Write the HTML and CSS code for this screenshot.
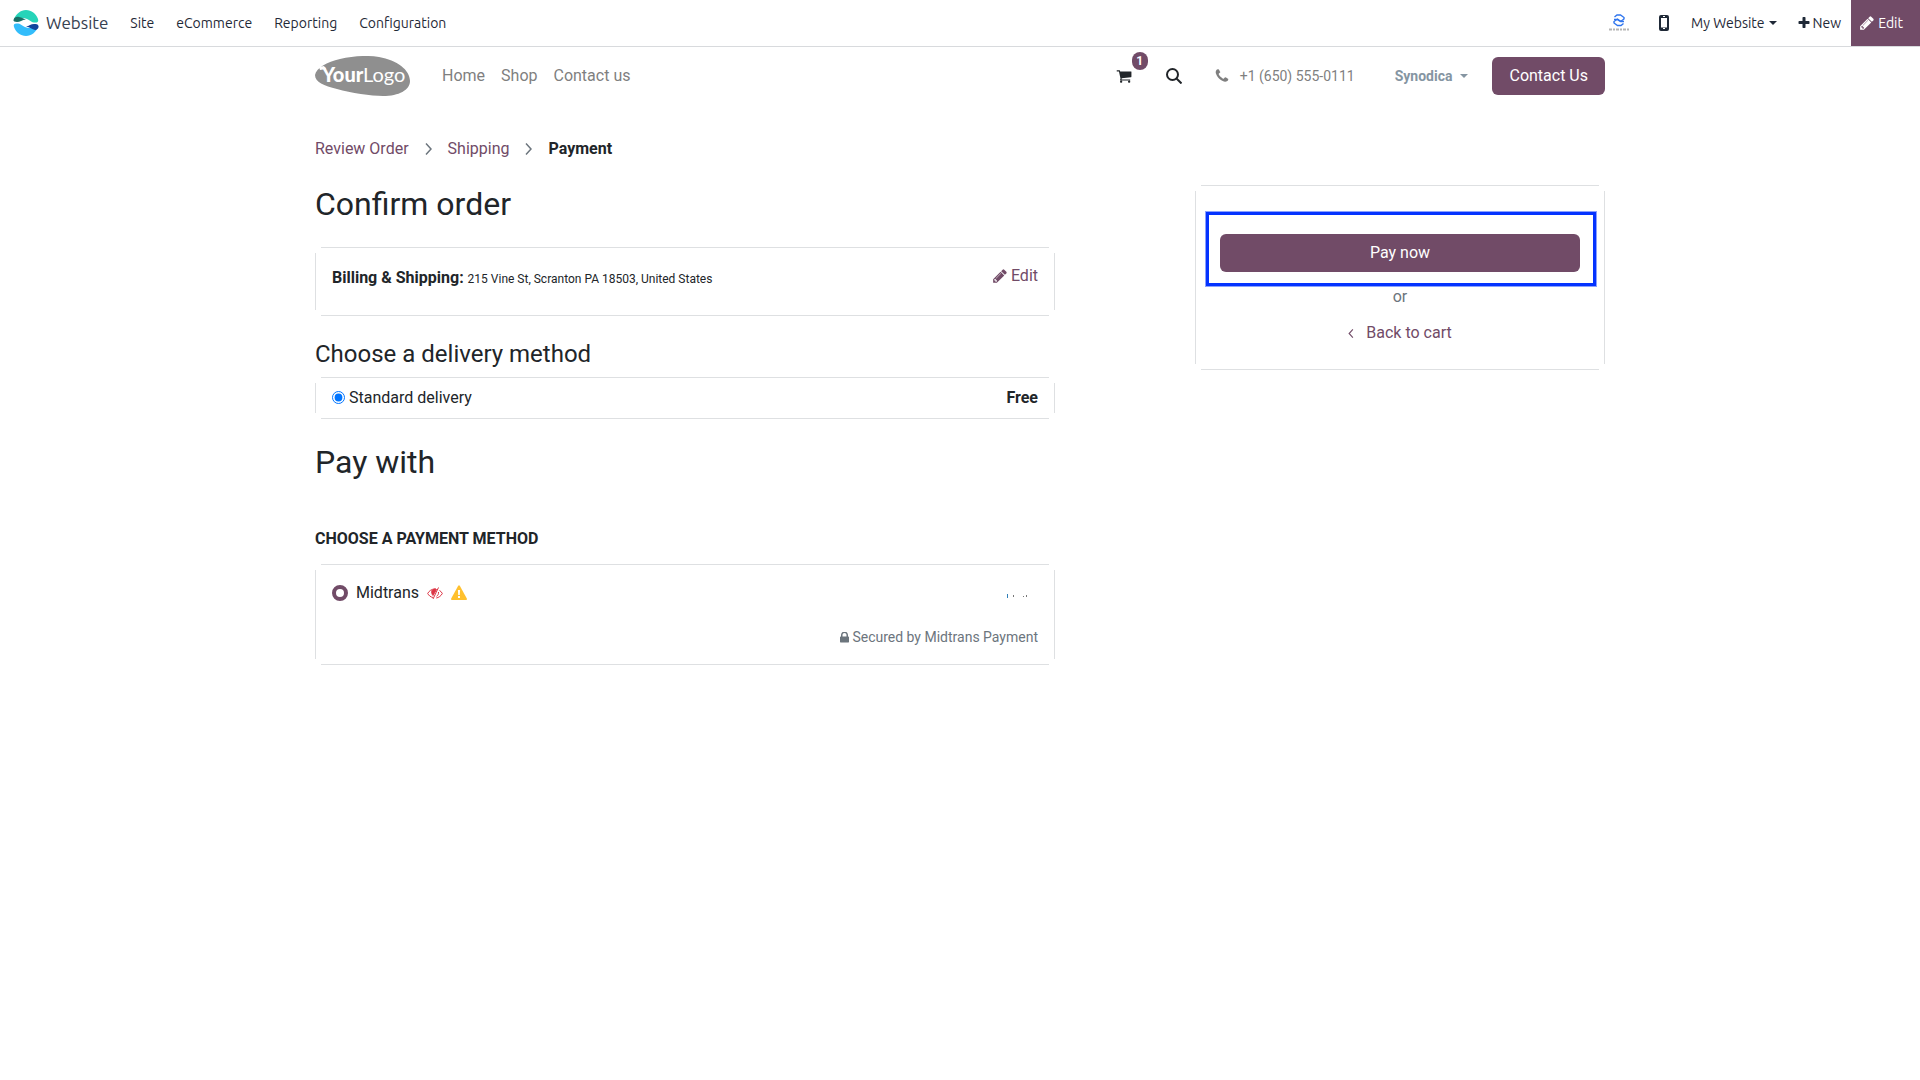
FILE: index.html
```html
<!DOCTYPE html>
<html lang="en">
  <head>
    <meta charset="utf-8">
    <title>Payment | My Website</title>
    <link rel="stylesheet" href="styles.css">
  </head>
  <body>
    <!-- icons used more than once -->
    <svg class="sprite" aria-hidden="true">
      <symbol id="pencil" viewBox="0 0 1792 1792">
        <path d="M491 1536l91-91-235-235-91 91v107h128v128h107zm523-928q0-22-22-22-10 0-17 7l-542 542q-7 7-7 17 0 22 22 22 10 0 17-7l542-542q7-7 7-17zm-54-192l416 416-832 832h-416v-416zm683 96q0 53-37 90l-166 166-416-416 166-165q36-38 90-38 53 0 91 38l235 234q37 39 37 91z"/>
      </symbol>
      <symbol id="chevron" viewBox="0 0 7 12">
        <path d="M1 .500L6 6l-5 5.500" fill="none" stroke="currentColor" stroke-width="1.500"/>
      </symbol>
    </svg>

    <nav class="topbar">
      <a class="app" href="#">
        <svg width="26" height="26" viewBox="0 0 26 26">
          <path d="M1 9C3 4 7.500 0 13 0s10 3.500 12 9c1 3-1 4-4 3.500C17 12 15 8 10 8 6 8 3 11 1 10z" fill="#26d4b9"/>
          <path d="M.500 10C1 7 4 6.500 6 7c3 .500 5 2 7 2.500C9 10 7 12 4 12c-2 0-4-1-3.500-2z" fill="#1a6f66"/>
          <path d="M25 17c-2 5-6.500 9-12 9S3 22.500 1 17c-1-3 1-4 4-3.500C9 14 11 18 16 18c4 0 7-3 9-2z" fill="#33bdfb"/>
          <path d="M25.500 16c-.500-2-2.500-2-4.500-2-3 0-5 2-8 2.500 4 .500 6 3 9 3.500 2 0 4-2 3.500-4z" fill="#11459c"/>
        </svg>
        <span>Website</span>
      </a>
      <a href="#">Site</a>
      <a href="#">eCommerce</a>
      <a href="#">Reporting</a>
      <a href="#">Configuration</a>

      <div class="systray">
        <a class="company" href="#" aria-label="Company">
          <svg width="20" height="18" viewBox="0 0 20 18">
            <g fill="none" stroke="#2f75ee" stroke-width="1.400">
              <path d="M5.500 3L8 1h3.500L15 3.500v1.500L11.500 7.500 8 5.500H5"/>
              <path d="M14.500 9.500L12 11.500H8.500L5 9V7.500L8.500 5l3.500 2.500h3"/>
            </g>
            <path d="M0 15.500h20" stroke="#b5b5b5" stroke-width="2" stroke-dasharray="3 1 2 1"/>
          </svg>
        </a>
        <button class="mobile" type="button" aria-label="Mobile preview">
          <svg width="10" height="16" viewBox="0 0 10 16">
            <rect x="1" y="1" width="8" height="14" rx="1" fill="#fff" stroke="currentColor" stroke-width="2"/>
            <path d="M1 2h8M1 13.500h8" stroke="currentColor" stroke-width="2"/>
            <path d="M4 13.500h2M4 1.500h2" stroke="#fff"/>
          </svg>
        </button>
        <a class="site-switch" href="#">My Website <i class="caret"></i></a>
        <a class="new" href="#">
          <svg class="fa" viewBox="0 0 1792 1792"><path d="M1600 736v192q0 40-28 68t-68 28h-416v416q0 40-28 68t-68 28h-192q-40 0-68-28t-28-68v-416h-416q-40 0-68-28t-28-68v-192q0-40 28-68t68-28h416v-416q0-40 28-68t68-28h192q40 0 68 28t28 68v416h416q40 0 68 28t28 68z"/></svg>
          New
        </a>
        <button class="edit-page" type="button"><svg class="fa"><use href="#pencil"/></svg>Edit</button>
      </div>
    </nav>

    <header class="container header">
      <a class="logo" href="#" aria-label="YourLogo">
        <svg width="95" height="40" viewBox="0 0 95 40">
          <path d="M0 19C1 12 12 6 25 3 38 0 52-1 64 1c18 3 31 13 31 24 0 9-11 15-27 15-12 0-32-3-46-7C9 30 0 26 0 19z" fill="#8f8f8f"/>
          <path d="M4 11l5-1 2 3-6 1z" fill="#fff"/>
          <text x="7" y="26" class="logo-bold">Your</text>
          <text x="48" y="26" class="logo-light">Logo</text>
        </svg>
      </a>
      <a href="#">Home</a>
      <a href="#">Shop</a>
      <a href="#">Contact us</a>

      <div class="header-right">
        <a class="cart" href="#" aria-label="Cart">
          <svg class="fa" viewBox="0 0 1792 1792"><path d="M704 1536q0 52-38 90t-90 38-90-38-38-90 38-90 90-38 90 38 38 90zm896 0q0 52-38 90t-90 38-90-38-38-90 38-90 90-38 90 38 38 90zm128-1088v512q0 24-16.500 42.500t-40.500 21.500l-1044 122q13 60 13 70 0 16-24 64h920q26 0 45 19t19 45-19 45-45 19h-1024q-26 0-45-19t-19-45q0-11 8-31.500t16-36 21.500-40 15.500-29.500l-177-823h-204q-26 0-45-19t-19-45 19-45 45-19h256q16 0 28.500 6.500t19.500 15.500 13 24.500 8 26 5.500 29.500 4.500 26h1201q26 0 45 19t19 45z"/></svg>
          <span class="badge">1</span>
        </a>
        <button class="search" type="button" aria-label="Search">
          <svg width="16" height="16" viewBox="0 0 16 16" fill="none" stroke="currentColor" stroke-width="2"><circle cx="6.500" cy="6.500" r="5.500"/><path d="M10.500 10.500l5 5"/></svg>
        </button>
        <a class="phone" href="#">
          <svg class="fa" viewBox="0 0 1792 1792"><path d="M1600 1240q0 27-10 70.500t-21 68.500q-21 50-122 106-94 51-186 51-27 0-53-3.500t-57.500-12.500-47-14.500-55.500-20.500-49-18q-98-35-175-83-127-79-264-216t-216-264q-48-77-83-175-3-9-18-49t-20.500-55.500-14.500-47-12.500-57.500-3.500-53q0-92 51-186 56-101 106-122 25-11 68.500-21t70.500-10q14 0 21 3 18 6 53 76 11 19 30 54t35 63.500 31 53.500q3 4 17.500 25t21.500 35.500 7 28.500q0 20-28.500 50t-62 55-62 53-28.500 46q0 9 5 22.500t8.500 20.500 14 24 11.500 19q76 137 174 235t235 174q2 1 19 11.500t24 14 20.500 8.500 22.500 5q18 0 46-28.500t53-62 55-62 50-28.500q14 0 28.500 7t35.500 21.500 25 17.500q25 15 53.500 31t63.500 35 54 30q70 35 76 53 3 7 3 21z"/></svg>
          +1 (650) 555-0111
        </a>
        <a class="user" href="#">Synodica <i class="caret"></i></a>
        <a class="btn" href="#">Contact Us</a>
      </div>
    </header>

    <main class="container">
      <div class="breadcrumb">
        <a href="#">Review Order</a>
        <svg class="chevron"><use href="#chevron"/></svg>
        <a href="#">Shipping</a>
        <svg class="chevron"><use href="#chevron"/></svg>
        <strong>Payment</strong>
      </div>

      <div class="columns">
        <form class="order">
          <h2>Confirm order</h2>
          <div class="card address">
            <div class="address-text"><b>Billing &amp; Shipping:</b> <small>215 Vine St, Scranton PA 18503, United States</small></div>
            <a href="#"><svg class="fa"><use href="#pencil"/></svg>Edit</a>
          </div>

          <h3>Choose a delivery method</h3>
          <div class="card delivery">
            <input type="radio" id="standard" name="delivery" checked>
            <label for="standard">Standard delivery</label>
            <b>Free</b>
          </div>

          <h2 class="pay-with">Pay with</h2>
          <h4>CHOOSE A PAYMENT METHOD</h4>
          <div class="card payment">
            <div class="method">
              <input type="radio" id="midtrans" name="provider" checked>
              <label for="midtrans">Midtrans</label>
              <!-- unpublished -->
              <svg width="16" height="14" viewBox="0 0 16 14" fill="none" stroke="#dc3545">
                <path d="M6 11.500C3.500 11 1.800 9.500.700 7.500 2 5 4.500 3 8 3l1 .200M12.500 4.500c1.300.700 2.200 1.700 2.800 3-1.300 2.500-3.500 4-6 4.500"/>
                <path d="M5 4.500C4.300 6.500 5 8.500 6 9.500L9.500 3.500C8 2.500 6 3 5 4.500z" fill="#dc3545"/>
                <path d="M11.500 1.500L6 13M11.500 6C11.700 8 11 9.500 9.500 10.300"/>
              </svg>
              <!-- test mode -->
              <svg width="16" height="16" viewBox="0 0 16 16">
                <path d="M7.200.800q.800-1.300 1.600 0l7 12.700q.600 1.500-.800 1.500H1q-1.400 0-.800-1.500z" fill="#ffc02e"/>
                <path d="M6.900 5h2.200l-.300 5H7.200zM7 11h2v2H7z" fill="#fff"/>
              </svg>
              <svg class="brand" width="40" height="12" viewBox="0 0 40 12">
                <path d="M9 7h1v4H9z" fill="#2f7fb8"/>
                <path d="M15 8h1v2h-1zM25 9h1v1h-1zM28 8h1v2h-1z" fill="#777"/>
              </svg>
            </div>
            <div class="secured">
              <svg class="lock" viewBox="320 256 1152 1280"><path d="M640 768h512v-192q0-106-75-181t-181-75-181 75-75 181v192zm832 96v576q0 40-28 68t-68 28h-960q-40 0-68-28t-28-68v-576q0-40 28-68t68-28h32v-192q0-184 132-316t316-132 316 132 132 316v192h32q40 0 68 28t28 68z"/></svg>
              Secured by Midtrans Payment
            </div>
          </div>
        </form>

        <aside class="card summary">
          <div class="pay">
            <button class="btn" type="button">Pay now</button>
          </div>
          <span class="or">or</span>
          <a class="back" href="#"><svg class="chevron"><use href="#chevron"/></svg>Back to cart</a>
        </aside>
      </div>
    </main>
  </body>
</html>
```
FILE: styles.css
```css
* {
  box-sizing: border-box;
}

body {
  margin: 0;
  background: #fff;
  color: #212529;
  font: 16px/24px Roboto, sans-serif;
}

a {
  color: #714b67;
  text-decoration: none;
}

button {
  padding: 0;
  border: none;
  background: none;
  color: inherit;
  font: inherit;
  cursor: pointer;
}

h2,
h3,
h4 {
  margin: 0;
  font-weight: 400;
}

h2 {
  font-size: 32px;
  line-height: 38px;
}

h3 {
  font-size: 24px;
  line-height: 28px;
}

h4 {
  font-size: 16px;
  font-weight: 700;
}

svg {
  flex: none;
}

.sprite {
  display: none;
}

.fa {
  width: 16px;
  height: 16px;
  fill: currentColor;
}

.caret {
  border: 4px solid transparent;
  border-top-color: currentColor;
  border-bottom: none;
}

.chevron {
  width: 7px;
  height: 12px;
}

/* Top bar */
.topbar {
  display: flex;
  align-items: center;
  gap: 22px;
  height: 47px;
  padding-left: 13px;
  border-bottom: 1px solid #d8dadd;
  font-family: Ubuntu, "Noto Sans", sans-serif;
  font-size: 14px;
}

.topbar a {
  color: #1f2937;
}

.topbar .app {
  display: flex;
  align-items: center;
  gap: 7px;
  color: #374151;
  font-size: 17px;
}

.systray {
  display: flex;
  align-items: center;
  align-self: stretch;
  margin-left: auto;
}

.systray a,
.systray button {
  display: flex;
  align-items: center;
}

.company {
  margin-right: 30px;
}

.mobile {
  margin-right: 22px;
  color: #1f2937;
}

.site-switch {
  gap: 4px;
  margin-right: 20px;
}

.new {
  gap: 2px;
  margin-right: 10px;
}

.topbar .new svg {
  width: 14px;
}

.edit-page {
  align-self: stretch;
  gap: 3px;
}

.systray .edit-page {
  padding: 0 17px 0 8px;
  background: #714b67;
  color: #fff;
}

/* Site header */
.container {
  max-width: 1320px;
  margin: 0 auto;
  padding: 0 15px;
}

.header {
  display: flex;
  align-items: center;
  gap: 16px;
  height: 58px;
}

.header a {
  color: #7f7f7f;
}

.logo {
  display: flex;
  margin-right: 16px;
}

.logo-bold,
.logo-light {
  fill: #fff;
  font: 900 20px Lato, sans-serif;
}

.logo-light {
  font-weight: 400;
}

.header-right {
  display: flex;
  align-items: center;
  margin-left: auto;
  font-size: 14px;
}

.header .cart {
  position: relative;
  display: flex;
  margin-right: 34px;
  color: #212529;
}

.badge {
  position: absolute;
  left: 16px;
  bottom: 14px;
  width: 16px;
  border-radius: 9px;
  background: #714b67;
  color: #fff;
  font-size: 12px;
  font-weight: 700;
  line-height: 18px;
  text-align: center;
}

.search {
  display: flex;
  margin-right: 32px;
}

.phone,
.user {
  display: flex;
  align-items: center;
  gap: 10px;
  margin-right: 40px;
}

.header .user {
  gap: 8px;
  margin-right: 24px;
  color: #8595a2;
  font-weight: 700;
}

.btn,
.header .btn {
  padding: 7px 17px;
  border-radius: 6px;
  background: #714b67;
  color: #fff;
  font-size: 16px;
}

/* Checkout */
.breadcrumb {
  display: flex;
  align-items: center;
  gap: 16px;
  margin: 32px 0 24px;
}

.breadcrumb .chevron {
  color: #6c757d;
}

.columns {
  display: flex;
  align-items: flex-start;
  justify-content: space-between;
}

.order {
  flex: 0 1 740px;
}

/* the border lines stop short of the corners */
.card {
  --line: linear-gradient(#dee0e2, #dee0e2);
  padding: 0 17px;
  background:
    var(--line) top / calc(100% - 12px) 1px no-repeat,
    var(--line) bottom / calc(100% - 12px) 1px no-repeat,
    var(--line) left / 1px calc(100% - 12px) no-repeat,
    var(--line) right / 1px calc(100% - 12px) no-repeat;
}

.address {
  display: flex;
  justify-content: space-between;
  margin: 24px 0;
  padding-top: 17px;
  padding-bottom: 25px;
}

.address-text {
  padding-top: 2px;
}

.address small {
  font-size: 12px;
}

.address a {
  display: flex;
  align-items: center;
  gap: 3px;
  height: 24px;
}

.delivery {
  display: flex;
  align-items: center;
  height: 42px;
  margin-top: 9px;
}

.delivery input {
  margin: 0 4px 2px 0;
}

.delivery b {
  margin-left: auto;
}

.pay-with {
  margin: 24px 0 46px;
}

.payment {
  margin-top: 13px;
  padding-top: 17px;
  padding-bottom: 16px;
}

.method {
  display: flex;
  align-items: center;
  gap: 8px;
}

.method input {
  width: 16px;
  height: 16px;
  margin: 0;
  border: 4px solid #714b67;
  border-radius: 50%;
  appearance: none;
}

.brand {
  margin-left: auto;
}

.secured {
  display: flex;
  align-items: center;
  justify-content: flex-end;
  gap: 3px;
  margin-top: 20px;
  color: #6c757d;
  font-size: 14px;
}

.lock {
  width: 9px;
  height: 11px;
  fill: currentColor;
}

.summary {
  display: flex;
  flex: 0 1 410px;
  flex-direction: column;
  align-items: center;
  padding: 49px 25px 25px;
}

.pay {
  position: relative;
  display: grid;
  width: 100%;
}

/* highlight frame around the pay button */
.pay::after {
  content: "";
  position: absolute;
  inset: -22px -16px -14px -14px;
  border: 3px solid #0433ff;
  box-shadow: 0 0 0 1px #8ba1ff;
  pointer-events: none;
}

.or {
  margin-top: 13px;
  color: #6c757d;
}

.back {
  display: flex;
  align-items: center;
  gap: 12px;
  margin-top: 12px;
}

.back .chevron {
  width: 6px;
  height: 9px;
  transform: rotate(180deg);
}
```
